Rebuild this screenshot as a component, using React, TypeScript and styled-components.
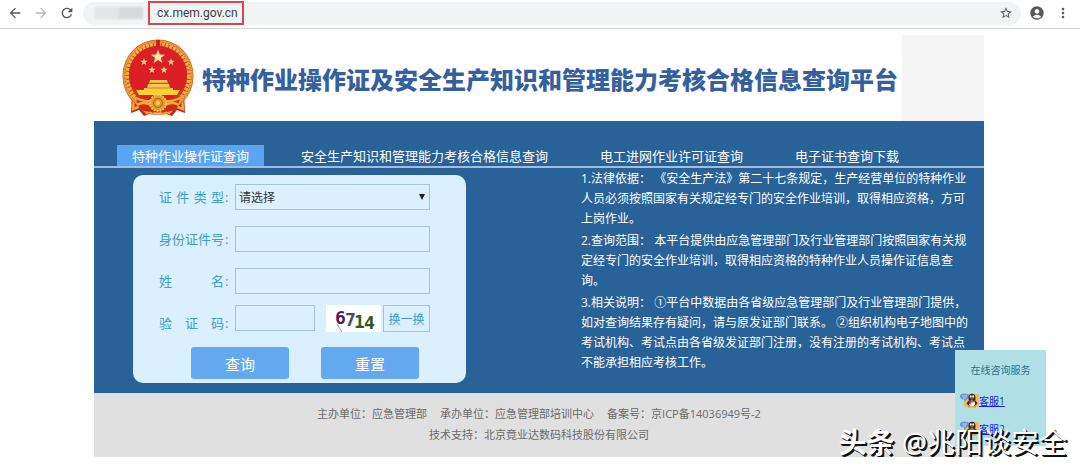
import React from 'react';
import styled, { createGlobalStyle, css } from 'styled-components';
import {
  MdAccountCircle,
  MdArrowBack,
  MdArrowForward,
  MdMoreVert,
  MdRefresh,
  MdStarBorder,
} from 'react-icons/md';

const sans = '"Open Sans", "Noto Sans CJK SC", sans-serif';

const GlobalStyle = createGlobalStyle`
  *, *::before, *::after { box-sizing: border-box; }
  body {
    margin: 0;
    background: #fff;
    font-family: ${sans};
    font-size: 13px;
  }
  button, input, select { font: inherit; margin: 0; }
  p, h1, h2 { margin: 0; }
`;

const Page = styled.div`
  position: relative;
`;

/* Browser bar */

const BrowserBar = styled.div`
  display: flex;
  align-items: center;
  height: 29px;
  padding: 0 9px 2px 7px;
  border-bottom: 1px solid #d2d3d5;
`;

const IconButton = styled.button<{ $muted?: boolean }>`
  display: flex;
  flex: none;
  padding: 0;
  border: 0;
  background: none;
  color: ${(p) => (p.$muted ? '#b4b6b9' : '#55585c')};
`;

const NavButtons = styled.div`
  display: flex;
  gap: 10px;
  width: 76px;
  flex: none;
`;

const AddressBar = styled.div`
  display: flex;
  flex: 1;
  align-items: center;
  height: 23px;
  padding: 0 8px 0 12px;
  border-radius: 12px;
  background: #f1f3f4;
`;

const Blurred = styled.span`
  width: 48px;
  height: 12px;
  margin-right: 5px;
  background: linear-gradient(90deg, #e2e4e6 0 50%, #d6d8db 50% 100%);
  filter: blur(1px);
`;

const Address = styled.input`
  width: 96px;
  height: 24px;
  padding: 0 0 0 7px;
  border: 2px solid #d8454d;
  background: transparent;
  color: #3c4043;
  font-family: Roboto, sans-serif;
  font-size: 12px;
`;

const Spacer = styled.span`
  flex: 1;
`;

const BarActions = styled.div`
  display: flex;
  gap: 10px;
  margin-left: 8px;
`;

/* Site */

const Site = styled.div`
  margin: 0 96px 0 94px;
`;

const Header = styled.header`
  display: flex;
  align-items: center;
  height: 92px;
  padding: 6px 0 0 28px;
`;

const Title = styled.h1`
  flex: 1;
  margin-left: 8px;
  padding-top: 4px;
  color: #34609f;
  font-size: 24px;
  font-weight: 900;
  line-height: 32px;
  white-space: nowrap;
`;

const HeaderBox = styled.div`
  flex: none;
  align-self: stretch;
  width: 82px;
  background: #f5f5f5;
`;

const Main = styled.main`
  padding-top: 24px;
  background: #296299;
`;

const Tabs = styled.nav`
  display: flex;
  gap: 22px;
  padding-left: 23px;
  border-bottom: 2px solid #a0bedb;
`;

const Tab = styled.a<{ $active?: boolean }>`
  height: 21px;
  padding: 0 15px;
  background: ${(p) => (p.$active ? '#59a5f2' : 'transparent')};
  color: #fff;
  line-height: 22px;
  text-decoration: none;
  white-space: nowrap;
`;

const Content = styled.div`
  display: flex;
  align-items: flex-start;
  justify-content: space-between;
  padding: 0 13px 10px 39px;
`;

const Card = styled.form`
  width: 333px;
  margin-top: 7px;
  padding: 1px 26px 4px;
  border-radius: 10px;
  background: #daf0fe;
`;

const Row = styled.div`
  display: flex;
  align-items: center;
  height: 42px;
`;

const Label = styled.label`
  display: flex;
  width: 76px;
  flex: none;
  color: #3f9ecb;
  line-height: 20px;

  &::after { content: ':'; margin-left: 1px; }
`;

const LabelText = styled.span`
  width: 65px;
  text-align: justify;
  text-align-last: justify;
`;

const field = css`
  height: 26px;
  border: 1px solid #9fc4e2;
  border-radius: 0;
  background: transparent;
  color: #333;
`;

const TextField = styled.input<{ $short?: boolean }>`
  ${field}
  width: ${(p) => (p.$short ? '80px' : '195px')};
  padding: 0 4px;
`;

const SelectWrap = styled.span`
  position: relative;
`;

const Select = styled.select`
  ${field}
  display: block;
  width: 195px;
  padding: 0 3px;
  appearance: none;
  font-size: 12px;
`;

const Arrow = styled.svg`
  position: absolute;
  top: 10px;
  right: 5px;
  pointer-events: none;
`;

const CodeFields = styled.div`
  display: flex;
  align-self: flex-start;
  padding-top: 3px;
`;

const Captcha = styled.svg`
  margin: 0 2px 0 11px;
  background: #fff;
`;

const SwapButton = styled.button`
  ${field}
  width: 47px;
  height: 27px;
  padding: 0;
  color: #3f9ecb;
  font-size: 12px;
`;

const Actions = styled.div`
  display: flex;
  gap: 32px;
  padding: 3px 0 0 32px;
`;

const ActionButton = styled.button`
  width: 98px;
  height: 32px;
  padding: 0;
  border: 0;
  border-radius: 3px;
  background: #64a8f0;
  color: #fff;
  font-size: 15px;
`;

const Info = styled.section`
  display: grid;
  gap: 2px;
  width: 390px;
  padding-top: 1px;
  color: #fff;
  font-size: 12px;
  line-height: 20px;
`;

const Footer = styled.footer`
  padding: 10px 0 12px;
  background: #e0e0e0;
  color: #6b6b6b;
  font-size: 11px;
  line-height: 21px;
  text-align: center;
`;

const Sponsors = styled.p`
  display: flex;
  justify-content: center;
  gap: 13px;
`;

/* Overlays */

const Service = styled.aside`
  position: absolute;
  top: 350px;
  right: 34px;
  width: 91px;
  height: 96px;
  padding: 10px 5px;
  background: #b0e0e6;
  font-size: 10px;
`;

const ServiceTitle = styled.h2`
  margin-bottom: 10px;
  color: #28708f;
  font-size: 10px;
  font-weight: 400;
  line-height: 20px;
  text-align: center;
`;

const ServiceLink = styled.a`
  display: flex;
  align-items: center;
  height: 28px;
  padding-bottom: 8px;
  color: #1a1aee;
`;

const Watermark = styled.div`
  position: absolute;
  top: 421px;
  right: 13px;
  color: #fff;
  font-size: 28px;
  line-height: 42px;
  text-shadow: 1px 1px 0 #111, 2px 2px 0 #111;
  white-space: nowrap;
`;

const starPath = (cx: number, cy: number, r: number) =>
  Array.from({ length: 10 }, (_, i) => {
    const a = -Math.PI / 2 + (i * Math.PI) / 5;
    const d = i % 2 ? r * 0.4 : r;
    return `${i ? 'L' : 'M'}${(cx + d * Math.cos(a)).toFixed(2)} ${(cy + d * Math.sin(a)).toFixed(2)}`;
  }).join('') + 'Z';

function Emblem() {
  return (
    <svg width="72" height="78" viewBox="0 0 72 78" role="img" aria-label="国徽">
      <path d="M10 54 9 74 17 71 22 77 36 72 50 77 55 71 63 74 62 54Z" fill="#c92318" />
      <path d="M12 60 11 70 19 67M60 60 61 70 53 67M19 68 25 74 36 69 47 74 53 68" fill="none" stroke="#eda936" strokeWidth="2.5" />
      <ellipse cx="36" cy="37" rx="35.5" ry="36.5" fill="#cf3a1c" />
      <ellipse cx="36" cy="37" rx="33.5" ry="34.5" fill="none" stroke="#e99a31" strokeWidth="3" />
      <ellipse cx="36" cy="37" rx="31" ry="32" fill="none" stroke="#f0b045" strokeWidth="4" strokeDasharray="3 1" />
      <ellipse cx="36" cy="37" rx="33" ry="34" fill="none" stroke="#bf3b1c" strokeWidth="1" strokeDasharray="1 2" />
      <ellipse cx="36" cy="35" rx="29" ry="28" fill="#da1f25" />
      <path d="M34 1h4v6l-2 3-2-3z" fill="#c92318" />
      <path d={starPath(36, 18, 7.5)} fill="#fbe7a0" />
      {[[22, 23], [49, 23], [30, 31], [42, 31]].map(([x, y]) => (
        <path key={x} d={starPath(x, y, 3.8)} fill="#fbd987" />
      ))}
      <path d="M28 41h17l1 3H27zM26 45h21l1 4h3v5H22v-5h3z" fill="#f7c84f" />
      <path d="M27 44h19M25 49h23" stroke="#d3822c" strokeWidth="1" />
      <path d="M14 51h44l-3 5H17z" fill="#fbd22f" />
      <path d="M13 57q23 8 46 0l-5 14q-18 5-36 0z" fill="#cf291b" />
      <path d="M12 58q9 5 18 4M60 58q-9 5-18 4M15 66q6-4 14 0M57 66q-6-4-14 0" fill="none" stroke="#f0a936" strokeWidth="2.5" />
      <circle cx="36" cy="64" r="8" fill="#e39a2c" stroke="#f6c550" strokeWidth="2" strokeDasharray="2 1" />
      <circle cx="36" cy="64" r="4.5" fill="none" stroke="#c4521c" />
      <circle cx="36" cy="64" r="2" fill="#fbd95b" />
      <path d="M27 72q9 5 18 0l-2 4H29z" fill="#e9a233" />
    </svg>
  );
}

function Penguin() {
  return (
    <svg width="19" height="15" viewBox="0 0 19 15" aria-hidden="true">
      <rect x="4" y="1" width="15" height="13" rx="1" fill="#eeb95c" />
      <ellipse cx="4.5" cy="3.5" rx="4.5" ry="3" fill="#6b93d8" />
      <path d="M4 6v3l3-3z" fill="#6b93d8" />
      <path d="M2 3h5M3 5h3" stroke="#d5e4fb" strokeWidth=".8" />
      <ellipse cx="12" cy="5" rx="3.5" ry="4.3" fill="#252525" />
      <path d="M8 8 6.500 11 8 11.500 9 13h6l1-1.500 1.500-.5L16 8z" fill="#252525" />
      <ellipse cx="12" cy="10.500" rx="3" ry="3" fill="#fff" />
      <ellipse cx="10.800" cy="3.500" rx=".9" ry="1.200" fill="#fff" />
      <ellipse cx="13.200" cy="3.500" rx=".9" ry="1.200" fill="#fff" />
      <path d="M10 5.500h4l-2 1.300z" fill="#f29a1f" />
      <path d="M8.500 7.200q3.500 2 7 0v1.500q-3 1-4.500.8l-.3 2-1.500-.2z" fill="#dd2c27" />
      <path d="M8 13h3.500v1.500H8zM12.500 13H16v1.500h-3.500z" fill="#f0961e" />
    </svg>
  );
}

const tabs = [
  '特种作业操作证查询',
  '安全生产知识和管理能力考核合格信息查询',
  '电工进网作业许可证查询',
  '电子证书查询下载',
];

const notes = [
  '1.法律依据\uff1a 《安全生产法》第二十七条规定\uff0c生产经营单位的特种作业人员必须按照国家有关规定经专门的安全作业培训\uff0c取得相应资格\uff0c方可上岗作业。',
  '2.查询范围\uff1a 本平台提供由应急管理部门及行业管理部门按照国家有关规定经专门的安全作业培训\uff0c取得相应资格的特种作业人员操作证信息查询。',
  '3.相关说明\uff1a ①平台中数据由各省级应急管理部门及行业管理部门提供\uff0c如对查询结果存有疑问\uff0c请与原发证部门联系。 ②组织机构电子地图中的考试机构、考试点由各省级发证部门注册\uff0c没有注册的考试机构、考试点不能承担相应考核工作。',
];

const sponsors = [
  '主办单位\uff1a应急管理部',
  '承办单位\uff1a应急管理部培训中心',
  '备案号\uff1a京ICP备14036949号-2',
];

export default function App() {
  return (
    <Page lang="zh-CN">
      <GlobalStyle />
      <BrowserBar>
        <NavButtons>
          <IconButton aria-label="后退"><MdArrowBack size={16} /></IconButton>
          <IconButton aria-label="前进" $muted><MdArrowForward size={16} /></IconButton>
          <IconButton aria-label="刷新"><MdRefresh size={16} /></IconButton>
        </NavButtons>
        <AddressBar>
          <Blurred />
          <Address aria-label="地址" defaultValue="cx.mem.gov.cn" />
          <Spacer />
          <IconButton aria-label="收藏"><MdStarBorder size={14} /></IconButton>
        </AddressBar>
        <BarActions>
          <IconButton aria-label="账户"><MdAccountCircle size={16} /></IconButton>
          <IconButton aria-label="更多"><MdMoreVert size={16} /></IconButton>
        </BarActions>
      </BrowserBar>

      <Site>
        <Header>
          <Emblem />
          <Title>特种作业操作证及安全生产知识和管理能力考核合格信息查询平台</Title>
          <HeaderBox />
        </Header>
        <Main>
          <Tabs>
            {tabs.map((t, i) => (
              <Tab key={t} href="#" $active={i === 0}>{t}</Tab>
            ))}
          </Tabs>
          <Content>
            <Card onSubmit={(e) => e.preventDefault()}>
              <Row>
                <Label htmlFor="type"><LabelText>证件类型</LabelText></Label>
                <SelectWrap>
                  <Select id="type"><option>请选择</option></Select>
                  <Arrow width="6" height="6" viewBox="0 0 6 6" aria-hidden="true">
                    <path d="M0 0h6L3 6z" fill="#222" />
                  </Arrow>
                </SelectWrap>
              </Row>
              <Row>
                <Label htmlFor="number"><LabelText>身份证件号</LabelText></Label>
                <TextField id="number" />
              </Row>
              <Row>
                <Label htmlFor="name"><LabelText>姓名</LabelText></Label>
                <TextField id="name" />
              </Row>
              <Row>
                <Label htmlFor="code"><LabelText>验证码</LabelText></Label>
                <CodeFields>
                  <TextField id="code" $short />
                  <Captcha width="55" height="27" viewBox="0 0 55 27" role="img" aria-label="6714">
                    <g fontFamily='"DejaVu Sans Mono", monospace' fontSize="18" fontWeight="700">
                      <text x="9" y="19" fill="#4a2156">6</text>
                      <text x="19" y="21" fill="#4c4a5a">7</text>
                      <text x="28" y="23" fill="#2d5a27">1</text>
                      <text x="38" y="24" fill="#36511f">4</text>
                    </g>
                    <path d="M11 19l5 8" stroke="#b78db5" strokeWidth="1" />
                  </Captcha>
                  <SwapButton type="button">换一换</SwapButton>
                </CodeFields>
              </Row>
              <Actions>
                <ActionButton type="submit">查询</ActionButton>
                <ActionButton type="reset">重置</ActionButton>
              </Actions>
            </Card>
            <Info>
              {notes.map((note) => (
                <p key={note}>{note}</p>
              ))}
            </Info>
          </Content>
        </Main>
        <Footer>
          <Sponsors>
            {sponsors.map((sponsor) => (
              <span key={sponsor}>{sponsor}</span>
            ))}
          </Sponsors>
          <p>{'技术支持\uff1a北京竟业达数码科技股份有限公司'}</p>
        </Footer>
      </Site>

      <Service>
        <ServiceTitle>在线咨询服务</ServiceTitle>
        <ServiceLink href="#"><Penguin />客服1</ServiceLink>
        <ServiceLink href="#"><Penguin />客服2</ServiceLink>
      </Service>
      <Watermark><b>头条</b> @兆阳谈安全</Watermark>
    </Page>
  );
}
